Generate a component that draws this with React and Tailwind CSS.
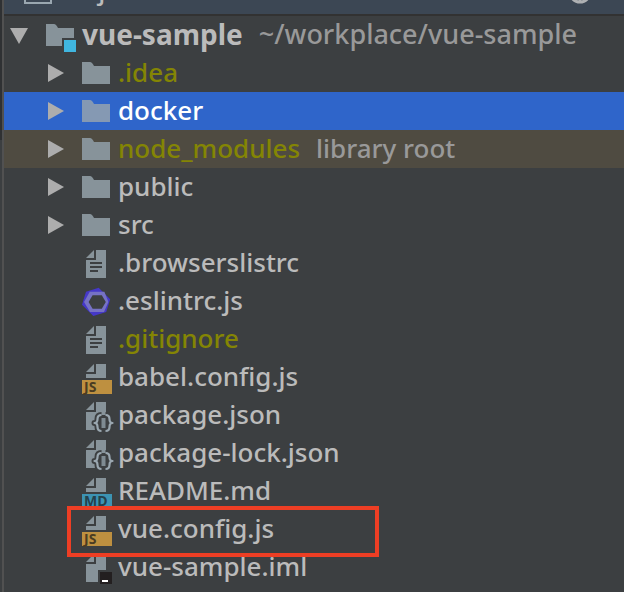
import React from "react";

const DOC = "#87939a";

function FolderShape() {
  return <path d="M2 5h8q2 0 4 4h16v18H2z" />;
}

function Fold() {
  return <path d="M6 11l8-8v8z" />;
}

function Icon({ kind, className = "" }) {
  return (
    <svg
      viewBox="0 0 32 32"
      className={`size-8 shrink-0 overflow-visible ${className}`}
      fill={DOC}
      aria-hidden="true"
    >
      {kind === "folder" && <FolderShape />}
      {kind === "selectedFolder" && (
        <g fill="#8599b3">
          <FolderShape />
        </g>
      )}
      {kind === "module" && (
        <>
          <path d="M2 5h8q2 0 4 4h16v10H18v8H2z" />
          <path d="M20 21h12v12H20z" fill="#40b6e0" />
        </>
      )}
      {kind === "text" && (
        <>
          <Fold />
          <path d="M16 3h10v28H6V13h10z" />
          <path d="M10 15h12v2H10zM10 19h12v2H10zM10 23h8v2h-8z" fill="#3c3f41" />
        </>
      )}
      {kind === "eslint" && (
        <>
          <path d="M6 6.7L18.7 2.7L30.2 14.3L26.2 27L13.3 31L2 19.7z" fill="#4538c8" />
          <path d="M9.8 6.7h14.6L28.4 17l-4.4 10H10L4 17z" fill="#7672c4" />
          <path d="M12.6 10.2h9.2l4 6.8l-4 6.8h-9.2l-4-6.8z" fill="#3c3f41" />
        </>
      )}
      {(kind === "js" || kind === "md") && (
        <>
          <Fold />
          <path d="M16 3h10v14H6v-4h10z" />
          <path d="M2 19h30v14H2z" fill={kind === "js" ? "#be9040" : "#3c93b3"} />
          <text
            x="4"
            y="31"
            fontSize="14"
            fontWeight="700"
            fontFamily="'Open Sans', sans-serif"
            fill={kind === "js" ? "#4b3c22" : "#24414c"}
          >
            {kind === "js" ? "JS" : "MD"}
          </text>
        </>
      )}
      {kind === "json" && (
        <>
          <Fold />
          <path d="M16 3h10v28H6V13h10z" />
          <g fill="none" strokeLinejoin="round">
            <path
              d="M21.5 16q-4 0-4 4q0 4-3 4q3 0 3 4q0 4 4 4M25.5 16q4 0 4 4q0 4 3 4q-3 0-3 4q0 4-4 4"
              stroke="#3c3f41"
              strokeWidth="6"
            />
            <path d="M19 16h9v16h-9z" fill="#3c3f41" />
            <path
              d="M21.5 16q-4 0-4 4q0 4-3 4q3 0 3 4q0 4 4 4M25.5 16q4 0 4 4q0 4 3 4q-3 0-3 4q0 4-4 4"
              stroke="#9aa7b0"
              strokeWidth="2.2"
            />
            <path d="M23.5 19v10" stroke="#7f8b92" strokeWidth="4" />
          </g>
        </>
      )}
      {kind === "iml" && (
        <>
          <Fold />
          <path d="M16 3h10v16h-8v12H6V13h10z" />
          <path d="M20 21h12v12H20z" fill="#231f20" />
          <path d="M22 29h6v2h-6z" fill="#fff" />
        </>
      )}
    </svg>
  );
}

function Toggle({ open, label }) {
  return (
    <button type="button" aria-label={`Toggle ${label}`} className="size-5 shrink-0">
      <svg viewBox="0 0 20 20" className="size-5" fill="#adadad" aria-hidden="true">
        {open ? <path d="M1 3h18l-9 16z" /> : <path d="M2 1l16 9l-16 9z" />}
      </svg>
    </button>
  );
}

const rows = [
  { name: ".idea", icon: "folder", dir: true, color: "text-[#848504]" },
  { name: "docker", icon: "selectedFolder", dir: true, color: "text-white", bg: "bg-[#2f65ca]" },
  { name: "node_modules", icon: "folder", dir: true, color: "text-[#848504]", bg: "bg-[#4f4b41]", note: "library root" },
  { name: "public", icon: "folder", dir: true },
  { name: "src", icon: "folder", dir: true },
  { name: ".browserslistrc", icon: "text" },
  { name: ".eslintrc.js", icon: "eslint" },
  { name: ".gitignore", icon: "text", color: "text-[#848504]" },
  { name: "babel.config.js", icon: "js" },
  { name: "package.json", icon: "json" },
  { name: "package-lock.json", icon: "json" },
  { name: "README.md", icon: "md" },
  { name: "vue.config.js", icon: "js", marked: true },
  { name: "vue-sample.iml", icon: "iml" },
];

export default function App() {
  return (
    <div className="flex min-h-screen bg-[#3c3f41] font-['Noto_Sans','Open_Sans',sans-serif] text-[26px] leading-9 font-medium text-[#bbbbbb]">
      <div className="w-0.5 shrink-0">
        <div className="h-35 bg-[#2f3133]" />
      </div>
      <div className="w-0.5 shrink-0 bg-[#515151]" />
      <div className="min-w-0 flex-1">
        <header className="flex h-4 items-end overflow-hidden border-b-2 border-[#323232] bg-[#3c4754] pr-8 pl-5 pb-2">
          <svg viewBox="0 0 28 24" className="h-6 w-7 shrink-0" fill="none" stroke="#9aa7b0" strokeWidth="2" aria-hidden="true">
            <path d="M1 1h26v20H1z" />
          </svg>
          <span className="ml-1 leading-8">Project</span>
          <button type="button" aria-label="Locate file" className="ml-auto size-6 shrink-0">
            <svg viewBox="0 0 24 24" className="size-6" fill="none" stroke="#afb1b3" strokeWidth="3" aria-hidden="true">
              <circle cx="12" cy="10" r="10" />
              <path d="M12 0v6M12 14v6M2 10h6M16 10h6" />
            </svg>
          </button>
        </header>
        <ul>
          <li className="flex h-9.5 items-center whitespace-nowrap pl-1.25">
            <Toggle open label="vue-sample" />
            <Icon kind="module" className="ml-3.75" />
            <span className="ml-1.5 pb-0.5 text-[28px] leading-9 font-bold">vue-sample</span>
            <span className="ml-4 pb-0.5 text-[27px] leading-9 text-[#999999]">~/workplace/vue-sample</span>
          </li>
          {rows.map((row) => (
            <li
              key={row.name}
              className={`relative flex h-9.5 items-center whitespace-nowrap ${row.dir ? "pl-10.5" : "pl-19"} ${row.bg ?? ""}`}
            >
              {row.dir && <Toggle label={row.name} />}
              <Icon kind={row.icon} className={row.dir ? "ml-3.5" : ""} />
              <span className={`ml-1.5 pb-0.5 ${row.color ?? ""}`}>{row.name}</span>
              {row.note && <span className="ml-4 pb-0.5 text-[#999999]">{row.note}</span>}
              {row.marked && (
                <span className="absolute -top-1 left-[63px] z-10 h-[51px] w-[312px] border-4 border-[#ee3e24]" />
              )}
            </li>
          ))}
        </ul>
      </div>
    </div>
  );
}
